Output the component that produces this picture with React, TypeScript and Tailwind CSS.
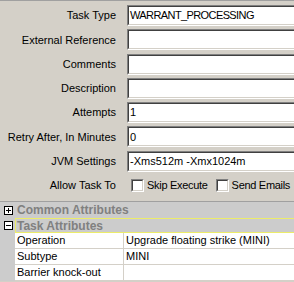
import React from "react";

type Field = { label: string; value?: string; caps?: boolean };

const fields: Field[] = [
  { label: "Task Type", value: "WARRANT_PROCESSING", caps: true },
  { label: "External Reference" },
  { label: "Comments" },
  { label: "Description" },
  { label: "Attempts", value: "1" },
  { label: "Retry After, In Minutes", value: "0" },
  { label: "JVM Settings", value: "-Xms512m -Xmx1024m" },
];

const attrs = [
  { name: "Operation", value: "Upgrade floating strike (MINI)" },
  { name: "Subtype", value: "MINI" },
  { name: "Barrier knock-out", value: "" },
];

function Sunken({ children, className }: { children?: React.ReactNode; className?: string }) {
  return (
    <div className={`border border-t-[#808080] border-l-[#808080] border-b-white border-r-white ${className ?? ""}`}>
      <div className="size-full border border-t-[#404040] border-l-[#404040] border-b-[#d4d0c8] border-r-[#d4d0c8] bg-white">
        {children}
      </div>
    </div>
  );
}

function Check({ label }: { label: string }) {
  return (
    <div className="flex items-center gap-[3px]">
      <Sunken className="size-[13px] shrink-0" />
      <span className="tracking-[-0.3px]">{label}</span>
    </div>
  );
}

function Toggle({ open }: { open?: boolean }) {
  return (
    <svg width="9" height="9" viewBox="0 0 9 9" className="block">
      <rect x="0.5" y="0.5" width="8" height="8" fill="white" stroke="#000" />
      <path d="M2 4.5h5" stroke="#000" />
      {!open && <path d="M4.5 2v5" stroke="#000" />}
    </svg>
  );
}

export default function App() {
  return (
    <div className="w-[294px] h-[282px] overflow-hidden bg-[#d4d0c8] border-t border-[#a0a0a0] font-['Liberation_Sans',Arial,sans-serif] text-[11px] text-black">
      <div className="h-[200px] flex flex-col gap-[3.3px] pt-[4px]">
        {fields.map((f) => (
          <div key={f.label} className="flex items-center h-[21px] shrink-0">
            <div className="w-[116px] shrink-0 text-right whitespace-nowrap">{f.label}</div>
            <Sunken className="ml-[11px] w-[200px] h-[21px] shrink-0">
              <div className={`h-full flex items-center pl-[1px] whitespace-nowrap ${f.caps ? "tracking-[-0.6px]" : ""}`}>
                {f.value}
              </div>
            </Sunken>
          </div>
        ))}
        <div className="flex items-center h-[20px] shrink-0">
          <div className="w-[116px] shrink-0 text-right whitespace-nowrap">Allow Task To</div>
          <div className="ml-[15px] flex items-center gap-[8px] whitespace-nowrap">
            <Check label="Skip Execute" />
            <Check label="Send Emails" />
          </div>
        </div>
      </div>

      <div className="border-t border-[#a0a0a0] bg-[#cccccc]">
        <div className="flex items-center h-[16px]">
          <div className="w-[15px] shrink-0 pl-[4px]">
            <Toggle />
          </div>
          <span className="pl-[2px] font-bold text-[12px] text-[#808080] whitespace-nowrap">Common Attributes</span>
        </div>
        <div className="flex items-center h-[15px]">
          <div className="w-[15px] shrink-0 pl-[4px]">
            <Toggle open />
          </div>
          <div className="flex-1 h-full border border-r-0 border-[#ecec6a] flex items-center pl-[1px]">
            <span className="font-bold text-[12px] text-[#808080] whitespace-nowrap">Task Attributes</span>
          </div>
        </div>
        {attrs.map((a) => (
          <div key={a.name} className="flex h-[16px]">
            <div className="w-[15px] shrink-0" />
            <div className="w-[108px] shrink-0 bg-white border-b border-[#d4d0c8] pl-[2px] flex items-center whitespace-nowrap">
              {a.name}
            </div>
            <div className="flex-1 bg-white border-b border-l border-[#d4d0c8] pl-[2px] flex items-center whitespace-nowrap">
              {a.value}
            </div>
          </div>
        ))}
      </div>
    </div>
  );
}
